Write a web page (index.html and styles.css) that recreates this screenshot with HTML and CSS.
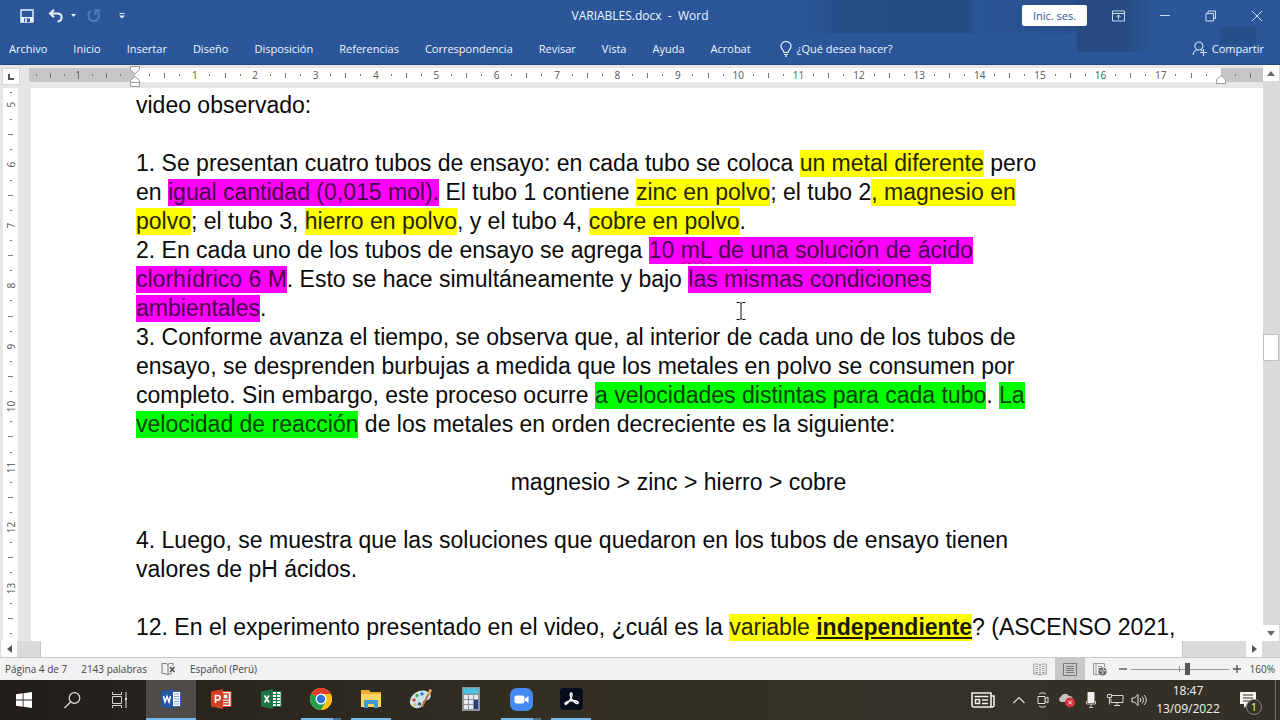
FILE: index.html
```html
<!DOCTYPE html>
<html lang="es">
<head>
    <meta charset="UTF-8">
    <meta name="viewport" content="width=device-width, initial-scale=1.0">
    <title>VARIABLES.docx - Word</title>
    <link rel="stylesheet" href="styles.css">
</head>
<body>
<header class="app-header">
    <div class="title-bar">
        <div class="quick-access">
            <button aria-label="Guardar"><svg width="14" height="14" viewBox="0 0 14 14"><path d="M1 1h12v12H1z" fill="none" stroke="#e8f2fc" stroke-width="1.4"/><path d="M1 8h12v5H1z" fill="#e8f2fc"/><path d="M4 9.500h6V13H4z" fill="#2b579a"/><path d="M5 10h1.800v3H5z" fill="#e8f2fc"/></svg></button>
            <button aria-label="Deshacer"><svg width="16" height="14" viewBox="0 0 16 14"><path d="M2 4.500h7.500c5.500 0 5.500 7.500 0 8M6 .8L2 4.500l4 3.700" fill="none" stroke="#e8f2fc" stroke-width="2"/></svg></button>
            <button class="caret" aria-label="Opciones de deshacer"><svg width="5" height="4" viewBox="0 0 5 4"><path d="M0 0h5L2.500 3z" fill="#e8f2fc"/></svg></button>
            <button aria-label="Rehacer"><svg width="14" height="14" viewBox="0 0 14 14"><path d="M4 2a5.400 5.400 0 1 0 6.500.8M8.500 6V1.500H13" fill="none" stroke="#5580ba" stroke-width="1.800"/></svg></button>
            <button class="customize" aria-label="Personalizar barra"><svg width="6" height="6" viewBox="0 0 6 6"><path d="M.5 0h5v1h-5zM0 2.500h6L3 5.500z" fill="#e8f2fc"/></svg></button>
        </div>
        <div class="doc-title">VARIABLES.docx&nbsp; -&nbsp; Word</div>
        <div class="window-controls">
            <button class="sign-in">Inic. ses.</button>
            <button class="win-btn" aria-label="Opciones de la cinta"><svg width="14" height="12" viewBox="0 0 14 12"><path d="M.5 1h12v10H.5zM.5 3.500h12M6.500 9.500V5M4.500 7l2-2 2 2" fill="none" stroke="#c9dcf3"/></svg></button>
            <button class="win-btn" aria-label="Minimizar"><svg width="12" height="12" viewBox="0 0 12 12"><path d="M1 5.500h10" stroke="#c9dcf3"/></svg></button>
            <button class="win-btn" aria-label="Restaurar"><svg width="12" height="12" viewBox="0 0 12 12"><path d="M1 3.500h7.500V11H1zM3 3.500V1h7.500v7.500h-2" fill="none" stroke="#c9dcf3"/></svg></button>
            <button class="win-btn" aria-label="Cerrar"><svg width="12" height="12" viewBox="0 0 12 12"><path d="M1 1l10 10M11 1L1 11" stroke="#c9dcf3"/></svg></button>
        </div>
    </div>
    <nav class="ribbon-tabs">
        <a href="#">Archivo</a>
        <a href="#">Inicio</a>
        <a href="#">Insertar</a>
        <a href="#">Diseño</a>
        <a href="#">Disposición</a>
        <a href="#">Referencias</a>
        <a href="#">Correspondencia</a>
        <a href="#">Revisar</a>
        <a href="#">Vista</a>
        <a href="#">Ayuda</a>
        <a href="#">Acrobat</a>
        <button class="tell-me"><svg width="12" height="16" viewBox="0 0 12 16"><path d="M4 11.500c0-2.500-3-3-3-6.200a5 4.800 0 0 1 10 0c0 3.200-3 3.700-3 6.200zM4 13.500h4M5 15.200h2" fill="none" stroke="#e8f2fc" stroke-width="1.200"/></svg>¿Qué desea hacer?</button>
        <button class="share"><svg width="15" height="15" viewBox="0 0 15 15"><path d="M1 14c.5-3 2-4.600 4.500-5.200M7 1a4 4 0 0 1 2.500 7A4 4 0 1 1 7 1zM9 9l1.500 1M11.500 8v7M8 11.500h7" fill="none" stroke="#c9dcf3" stroke-width="1.100"/></svg>Compartir</button>
    </nav>
</header>

<main class="workspace">
    <div class="ruler-row">
        <div class="corner"><button aria-label="Tabulación"><svg width="6" height="6" viewBox="0 0 6 6"><path d="M1 0v5h5" fill="none" stroke="#555" stroke-width="2"/></svg></button></div>
        <div class="ruler">
            <div class="marks margin-left" data-from="-7" data-to="-1"></div>
            <div class="marks text-width" data-from="1" data-to="71">
                <svg class="indent-left" width="10" height="22" viewBox="0 0 10 22"><path d="M.5.500h9v3L5 8 .5 3.500zM.5 16.500v-2L5 10.500l4.500 4v2zM.5 16.500h9v4h-9z" fill="#fff" stroke="#999"/></svg>
                <svg class="indent-right" width="10" height="9" viewBox="0 0 10 9"><path d="M.5 8.500v-4L5 .5l4.500 4v4z" fill="#fff" stroke="#999"/></svg>
            </div>
            <div class="marks margin-right" data-from="1" data-to="2"></div>
        </div>
    </div>
    <div class="side-ruler">
        <div class="marks vertical" data-from="19" data-to="55"></div>
    </div>
    <article class="page">
        <p>video observado:</p>
        <p>&nbsp;</p>
        <p>1. Se presentan cuatro tubos de ensayo: en cada tubo se coloca <mark>un metal diferente</mark> pero<br>
            en <mark class="pink">igual cantidad (0,015 mol).</mark> El tubo 1 contiene <mark>zinc en polvo</mark>; el tubo 2<mark>, magnesio en<br>
            polvo</mark>; el tubo 3, <mark>hierro en polvo</mark>, y el tubo 4, <mark>cobre en polvo</mark>.</p>
        <p>2. En cada uno de los tubos de ensayo se agrega <mark class="pink">10 <span class="typo">mL</span> de una solución de ácido<br>
            clorhídrico 6 M</mark>. Esto se hace simultáneamente y bajo <mark class="pink">las mismas condiciones<br>
            ambientales</mark>.</p>
        <p>3. Conforme avanza el tiempo, se observa que, al interior de cada uno de los tubos de<br>
            ensayo, se desprenden burbujas a medida que los metales en polvo se consumen por<br>
            completo. Sin embargo, este proceso ocurre <mark class="green">a velocidades distintas para cada tubo</mark>. <mark class="green">La<br>
            velocidad de reacción</mark> de los metales en orden decreciente es la siguiente:</p>
        <p>&nbsp;</p>
        <p class="formula">magnesio &gt; zinc &gt; hierro &gt; cobre</p>
        <p>&nbsp;</p>
        <p>4. Luego, se muestra que las soluciones que quedaron en los tubos de ensayo tienen<br>
            valores de pH ácidos.</p>
        <p>&nbsp;</p>
        <p>12. En el experimento presentado en el video, ¿cuál es la <mark>variable <b>independiente</b></mark>? (ASCENSO 2021,</p>
        <svg class="text-cursor" width="10" height="18" viewBox="0 0 10 18"><path d="M.5.500h3L5 1.500 6.500.500h3M5 1.500v15M.5 17.500h3L5 16.500l1.500 1h3" fill="none" stroke="#111"/></svg>
    </article>
    <div class="v-scroll">
        <button aria-label="Subir"><svg width="8" height="5" viewBox="0 0 8 5"><path d="M0 5h8L4 0z" fill="#666"/></svg></button>
        <div class="v-before"></div>
        <div class="v-thumb"></div>
        <div class="v-after"></div>
        <button aria-label="Bajar"><svg width="8" height="5" viewBox="0 0 8 5"><path d="M0 0h8L4 5z" fill="#666"/></svg></button>
    </div>
</main>

<div class="h-scroll">
    <button aria-label="Izquierda"><svg width="5" height="8" viewBox="0 0 5 8"><path d="M5 0v8L0 4z" fill="#555"/></svg></button>
    <div class="h-thumb"></div>
    <button aria-label="Derecha"><svg width="5" height="8" viewBox="0 0 5 8"><path d="M0 0v8l5-4z" fill="#555"/></svg></button>
</div>

<footer class="status-bar">
    <span>Página 4 de 7</span>
    <span>2143 palabras</span>
    <svg width="15" height="14" viewBox="0 0 15 14"><path d="M7 2.500C5 1 3 1.500 1 1.500v10c2 0 4 0 6 1.500 1-1 2-1.500 4-1.500M7 2.500V13M7 2.500c1-1 2-1 4-1h1v2" fill="none" stroke="#777"/><path d="M9 5l4.500 5M13.500 5L9 10" stroke="#444" stroke-width="1.300"/></svg>
    <span>Español (Perú)</span>
    <div class="views">
        <button aria-label="Modo de lectura"><svg width="14" height="13" viewBox="0 0 14 13"><path d="M7 2C5 .8 3 1 .8 1v10c2.200 0 4.200 0 6.200 1 2-1 4-1 6.200-1V1C11 1 9 .8 7 2zM7 2v10M2.500 3.500H5M2.500 5.500H5M2.500 7.500H5M2.500 9.500H5M9 3.500h2.500M9 5.500h2.500M9 7.500h2.500M9 9.500h2.500" fill="none" stroke="#999"/></svg></button>
        <button class="active" aria-label="Diseño de impresión"><svg width="14" height="13" viewBox="0 0 14 13"><path d="M.5.500h13v12H.5zM3 3.500h8M3 5.500h8M3 7.500h8M3 9.500h8" fill="none" stroke="#777"/></svg></button>
        <button aria-label="Diseño web"><svg width="14" height="13" viewBox="0 0 14 13"><path d="M6 11.500H.5v-11h11V4M3 .5v11M5 3.500h4M5 5.500h2" fill="none" stroke="#999"/><circle cx="9.500" cy="8.500" r="4" fill="#666"/><path d="M7 7.500l2 .5 1 1.500-1 2M10.500 5.500l-.5 1.500 2.500 1" fill="none" stroke="#f2f2f2"/></svg></button>
    </div>
    <div class="zoom">
        <button aria-label="Alejar"><svg width="8" height="8" viewBox="0 0 8 8"><path d="M0 4h8" stroke="#555" stroke-width="1.400"/></svg></button>
        <input type="range" min="0" max="100" value="58" aria-label="Zoom">
        <button aria-label="Acercar"><svg width="8" height="8" viewBox="0 0 8 8"><path d="M0 4h8M4 0v8" stroke="#555" stroke-width="1.400"/></svg></button>
        <span>160%</span>
    </div>
</footer>

<div class="taskbar">
    <button class="system" aria-label="Inicio"><svg width="16" height="16" viewBox="0 0 16 16"><path d="M0 2.300L6.700 1.300V7.600H0zM7.500 1.200L16 0v7.600H7.500zM0 8.400h6.700v6.300L0 13.700zM7.500 8.400H16V16l-8.500-1.200z" fill="#fff"/></svg></button>
    <button class="system" aria-label="Buscar"><svg width="17" height="17" viewBox="0 0 17 17"><circle cx="10.500" cy="6" r="5.300" fill="none" stroke="#e4e2df" stroke-width="1.200"/><path d="M6.500 10L.5 16" stroke="#e4e2df" stroke-width="1.200"/></svg></button>
    <button class="system" aria-label="Vista de tareas"><svg width="18" height="16" viewBox="0 0 18 16"><path d="M1.500 0v2.500h9V0M1.500 4.500h9v7h-9zM1.500 16v-2.500h9V16M15 0v5M15 9v7" fill="none" stroke="#d8d6d2"/><path d="M14 5.500h2v3h-2z" fill="#e4e2df"/></svg></button>
    <button class="app current" aria-label="Word"><svg width="22" height="22" viewBox="0 0 22 22"><path d="M10 3.500h10.500v15H10z" fill="#fff" stroke="#2f62b0"/><path d="M14 6h5M14 8.500h5M14 11h5M14 13.500h5M14 16h5" stroke="#7ba0d8"/><path d="M1 3.500L13 1v20L1 18.500z" fill="#2457a7"/><path d="M3.500 8L5 14l2-5.500L9 14l1.500-6" fill="none" stroke="#fff" stroke-width="1.500"/></svg></button>
    <button class="app" aria-label="PowerPoint"><svg width="22" height="22" viewBox="0 0 22 22"><path d="M11 3.500h10v15H11z" fill="#fff" stroke="#d2482a"/><path d="M13 6h5v5h-5zM12 13.500h7M12 16h7" fill="none" stroke="#d2482a" stroke-width="1.500"/><path d="M1 3.500L13 1v20L1 18.500z" fill="#cf4122"/><path d="M5.500 15V7.500h2c3.500 0 3.500 4.500 0 4.500h-2" fill="none" stroke="#fff" stroke-width="1.700"/></svg></button>
    <button class="app" aria-label="Excel"><svg width="22" height="22" viewBox="0 0 22 22"><path d="M11 3.500h10v15H11z" fill="#fff" stroke="#1d7544"/><path d="M12 6.500h8M12 9.500h8M12 12.500h8M12 15.500h8M16.500 4v14" stroke="#1d7544" stroke-width="1.200"/><path d="M1 3.500L13 1v20L1 18.500z" fill="#1d7544"/><path d="M4.500 7.500l4.500 7M9 7.500l-4.500 7" stroke="#fff" stroke-width="1.700"/></svg></button>
    <button class="app running split" aria-label="Chrome"><svg width="22" height="22" viewBox="0 0 22 22"><circle cx="11" cy="11" r="11" fill="#fbc116"/><path d="M11 11L1.500 5.500a11 11 0 0 1 19 0z" fill="#e33b2e"/><path d="M11 11L1.500 5.500A11 11 0 0 0 11 22l5-8.500z" fill="#1ea04c"/><path d="M11 6h9.800a11 11 0 0 1-9.800 16l4.700-8z" fill="#fbc116"/><circle cx="11" cy="11" r="5.500" fill="#fff"/><circle cx="11" cy="11" r="4.200" fill="#2f74e0"/></svg></button>
    <button class="app running" aria-label="Explorador"><svg width="22" height="20" viewBox="0 0 22 20"><path d="M1 1h8l1.500 2H21v15H1z" fill="#e8ac2a"/><path d="M1 5h20v13H1z" fill="#fbd566"/><path d="M4 11h14v8h-4v-4H8v4H4z" fill="#3f9ad6"/></svg></button>
    <button class="app" aria-label="Paint"><svg width="24" height="22" viewBox="0 0 24 22"><path d="M1 13C2 6 10 1 17 3c6 2 6 7 2 9-3 1-5 0-5 3 0 5-6 6-9 4.500C2 18 .5 16 1 13z" fill="#cfe2ec"/><circle cx="5" cy="12" r="1.800" fill="#d94735"/><circle cx="8" cy="7.500" r="1.700" fill="#45a65a"/><circle cx="13" cy="6" r="1.700" fill="#3277c8"/><circle cx="6" cy="16.500" r="1.600" fill="#e8b833"/><circle cx="10.500" cy="16" r="1.800" fill="#4e5a60"/><path d="M13 19L20 5" stroke="#b8743a" stroke-width="2"/><path d="M19 6l1-5 3 1-2 5z" fill="#e7a763"/></svg></button>
    <button class="app" aria-label="Calculadora"><svg width="20" height="24" viewBox="0 0 20 24"><path d="M1 0h18v24H1z" fill="#8b9499"/><path d="M2.500 1.500h15v5h-15z" fill="#46c3e0"/><path d="M3 8h4v4H3zM8 8h4v4H8zM13 8h4v4h-4zM3 13h4v4H3zM8 13h4v4H8zM3 18h4v4H3zM8 18h4v4H8z" fill="#e6eaec"/><path d="M13 13h4v9h-4z" fill="#253d82"/></svg></button>
    <button class="app running split" aria-label="Zoom"><svg width="23" height="23" viewBox="0 0 23 23"><rect width="23" height="23" rx="7" fill="#4489f4"/><rect x="4.500" y="7.500" width="10" height="8" rx="2" fill="#fff"/><path d="M15 10.500l3.500-2.500v7L15 12.500z" fill="#fff"/></svg></button>
    <button class="app running" aria-label="Acrobat"><svg width="23" height="22" viewBox="0 0 23 22"><rect width="23" height="22" rx="4" fill="#050c1c"/><path d="M11 5c2 0 1 4-1 7-2 3.500-4.500 5-5 4-.5-1.500 4-3.500 8-3.500s6 2 5 2.800c-1.300.8-5-1.300-7-5.300C10 7.500 10 5 11 5z" fill="none" stroke="#fff" stroke-width="1.400"/></svg></button>

    <div class="tray">
        <button class="news" aria-label="Noticias"><svg width="24" height="16" viewBox="0 0 24 16"><path d="M1 1h19v14H3c-1 0-2-.5-2-2zM20 4h3v9c0 1-.5 2-2 2h-2M3.500 4.500h14" fill="none" stroke="#f3f1ed" stroke-width="1.600"/><path d="M4.500 7.500h4v4h-4zM11 8h6M11 11.500h6" fill="none" stroke="#f3f1ed" stroke-width="1.500"/></svg></button>
        <button aria-label="Mostrar iconos ocultos"><svg width="12" height="8" viewBox="0 0 12 8"><path d="M.5 7L6 1.500 11.500 7" fill="none" stroke="#e4e2df" stroke-width="1.200"/></svg></button>
        <button aria-label="Reunirse ahora"><svg width="12" height="16" viewBox="0 0 12 16"><path d="M1 4.500h7v7H1zM8 7l3-2v6L8 9M2 2c2-1.500 5-1.500 7 0M2 14c2 1.500 5 1.500 7 0" fill="none" stroke="#e4e2df"/></svg></button>
        <button aria-label="OneDrive"><svg width="18" height="15" viewBox="0 0 18 15"><path d="M3 9a3 3 0 0 1 0-5.500A4.500 4.500 0 0 1 11 3a3.500 3.500 0 0 1 3 6z" fill="#c6c4c0"/><circle cx="12" cy="9.500" r="5" fill="#d92c3c"/><path d="M10 7.500l4 4M14 7.500l-4 4" stroke="#fff"/></svg></button>
        <button aria-label="Micrófono"><svg width="10" height="16" viewBox="0 0 10 16"><rect x="1.500" width="7" height="11" rx="1" fill="#f3f1ed"/><path d="M.5 9v3h9V9M5 12v3.500M3 15.500h4" fill="none" stroke="#c6c4c0"/></svg></button>
        <button aria-label="Red"><svg width="17" height="14" viewBox="0 0 17 14"><path d="M5 2.500h11v7H4V6M10 9.500v3M7 12.500h6M.5 1.500h4v3h-4zM2.500 4.500v7" fill="none" stroke="#d8d6d2"/></svg></button>
        <button aria-label="Volumen"><svg width="16" height="14" viewBox="0 0 16 14"><path d="M1 5h2.500L7 1.500v11L3.500 9H1zM9 5c1 1.500 1 2.500 0 4M11 3.500c2 2.500 2 4.500 0 7M13 2c3 3.500 3 6.500 0 10" fill="none" stroke="#e4e2df"/></svg></button>
        <time class="clock">18:47<br>13/09/2022</time>
        <button class="notices" aria-label="Notificaciones"><svg width="18" height="18" viewBox="0 0 18 18"><path d="M1 1h16v12H9l-4 4v-4H1z" fill="#f6f4f0"/><path d="M4 4h10M4 7h10M4 10h7" stroke="#36322a"/></svg><span class="badge">1</span></button>
    </div>
</div>
<script src="ruler.js"></script>
</body>
</html>
```
FILE: styles.css
```css
* {
    box-sizing: border-box;
}
body {
    margin: 0;
    height: 100vh;
    display: flex;
    flex-direction: column;
    overflow: hidden;
    font-family: "Open Sans", "Noto Sans", sans-serif;
    font-size: 12px;
    background: #e6e6e6;
}
button {
    display: flex;
    align-items: center;
    justify-content: center;
    padding: 0;
    border: none;
    background: none;
    color: inherit;
    font: inherit;
    cursor: pointer;
}
svg {
    display: block;
    flex: none;
}

/* title and ribbon */
.app-header {
    flex: none;
    height: 65px;
    color: #edf5fd;
    background:
        linear-gradient(90deg, #264b82 60%, #2a5596) right 130px top / 73px 52px no-repeat,
        linear-gradient(90deg, #2b579a, #274e89 40px, #264c84 170px, #2a5596 175px, #284f8b) right 203px top / 277px 33px no-repeat,
        linear-gradient(#274f8b, #274f8b) right 24px top 27px / 36px 18px no-repeat,
        #2b579a;
    border-bottom: 1px solid #234a85;
}
.title-bar {
    display: grid;
    grid-template-columns: 1fr auto 1fr;
    align-items: center;
    height: 31px;
}
.quick-access {
    display: flex;
    align-items: center;
    padding-left: 20px;
    gap: 14px;
}
.quick-access .caret {
    margin-left: -7px;
    margin-right: -3px;
}
.quick-access .customize {
    margin-left: 4px;
}
.window-controls {
    display: flex;
    align-items: center;
    justify-content: flex-end;
}
.sign-in {
    width: 65px;
    height: 21px;
    margin-right: 9px;
    border-radius: 2px;
    background: #fff;
    color: #2b579a;
    font-size: 11px;
}
.win-btn {
    width: 46px;
    height: 30px;
}
.ribbon-tabs {
    display: flex;
    align-items: center;
    gap: 26px;
    height: 33px;
    padding: 2px 16px 0 9px;
    font-size: 11px;
    white-space: nowrap;
}
.ribbon-tabs a {
    color: inherit;
    text-decoration: none;
}
.tell-me,
.share {
    gap: 5px;
}
.tell-me {
    margin-left: 3px;
}
.share {
    margin-left: auto;
}

/* document area */
.workspace {
    flex: 1;
    min-height: 0;
    display: grid;
    grid-template-columns: 31px 1fr 17px;
    grid-template-rows: 23px 1fr;
}
.ruler-row {
    grid-column: 1 / 3;
    display: flex;
    padding-top: 3px;
}
.corner {
    width: 29px;
    padding-left: 2px;
}
.corner button {
    width: 18px;
    height: 17px;
    background: #fff;
    border: 1px solid #d8d8d8;
}
.ruler {
    flex: 1;
    display: flex;
    height: 14px;
}
.marks {
    display: flex;
    position: relative;
    color: #555;
    font-size: 10px;
}
.marks .mark {
    flex: 1 1 0;
    min-width: 0;
    min-height: 0;
    display: flex;
    align-items: center;
    justify-content: center;
}
.tick::before {
    content: "";
    width: 1px;
    height: 5px;
    background: #777;
}
.dot::before {
    content: "";
    width: 1px;
    height: 2px;
    background: #777;
}
.margin-left,
.margin-right {
    background: #c6c6c6;
}
.margin-left {
    width: 106px;
    padding-right: 8px;
}
.text-width {
    flex: 1;
    z-index: 1;
    padding: 0 7px;
    background: #fff;
}
.margin-right {
    width: 42px;
    padding: 0 5px 0 7px;
}
.indent-left {
    position: absolute;
    left: -5px;
    top: -2px;
}
.indent-right {
    position: absolute;
    right: -5px;
    top: 7px;
}
.side-ruler {
    padding-left: 3px;
    display: flex;
}
.vertical {
    flex-direction: column;
    width: 15px;
    background: #fff;
}
.vertical .mark {
    transform: rotate(-90deg);
}
.vertical .mark:first-child {
    flex: 0 0 9px;
}
.page {
    position: relative;
    overflow: hidden;
    min-width: 0;
    padding: 3px 42px 0 105px;
    background: #fff;
    color: #0a0a0a;
    font: 23px/29px "Liberation Sans", Arial, sans-serif;
    white-space: nowrap;
}
.page p {
    margin: 0;
}
.page .formula {
    text-align: center;
}
mark {
    padding-bottom: 1px;
    background: #ff0;
    color: #252500;
}
mark.pink {
    background: #f0f;
    color: #480048;
}
mark.green {
    background: #0f0;
    color: #004000;
}
mark b {
    color: #1a1a00;
    text-decoration: underline;
}
.typo {
    text-decoration: underline wavy #b00060 1px;
    text-underline-offset: 2px;
}
.text-cursor {
    position: absolute;
    left: 705px;
    top: 214px;
}

/* scroll bars */
.v-scroll {
    grid-column: 3;
    grid-row: 1 / 3;
    display: flex;
    flex-direction: column;
    background: #dadada;
}
.v-scroll button,
.h-scroll button {
    flex: none;
    width: 16px;
    height: 16px;
    background: #fff;
}
.v-before {
    flex: 252;
}
.v-thumb {
    height: 27px;
    width: 16px;
    background: #fff;
    border: 1px solid #c0c0c0;
}
.v-after {
    flex: 262;
}
.h-scroll {
    flex: none;
    display: flex;
    height: 17px;
    padding: 0 18px 0 1px;
    background: #dadada;
    border-bottom: 1px solid #c6c6c6;
}
.h-thumb {
    flex: 1;
    margin: 0 63px 0 23px;
    background: #fff;
    border-left: 1px solid #c6c6c6;
    border-right: 1px solid #c6c6c6;
}

/* status bar */
.status-bar {
    flex: none;
    display: flex;
    align-items: center;
    gap: 14px;
    height: 22px;
    padding: 0 5px;
    background: #f2f2f2;
    color: #444;
    font-size: 10px;
    white-space: nowrap;
}
.views,
.zoom {
    display: flex;
    align-items: center;
}
.views {
    margin-left: auto;
}
.views button {
    width: 30px;
    height: 22px;
}
.views .active {
    background: #c8c8c8;
}
.zoom {
    margin-left: -10px;
}
.zoom input {
    appearance: none;
    width: 98px;
    height: 12px;
    margin: 0 4px;
    background:
        linear-gradient(#888, #888) center / 1px 6px no-repeat,
        linear-gradient(#999, #999) center / 100% 1px no-repeat;
}
.zoom input::-webkit-slider-thumb {
    appearance: none;
    width: 5px;
    height: 12px;
    background: #555;
}
.zoom span {
    margin-left: 9px;
}

/* taskbar */
.taskbar {
    flex: none;
    display: flex;
    height: 40px;
    background: linear-gradient(90deg, #211e1b, #2b271f 20%, #353023 45%, #353126 70%, #353027);
    color: #f3f1ed;
}
.system {
    width: 48px;
}
.app {
    width: 50px;
    border-bottom: 2px solid transparent;
}
.system + .app {
    margin-left: 2px;
}
.current {
    background: #504b47 content-box;
    border-color: #76b9ed;
}
.running {
    background: linear-gradient(#76b9ed, #76b9ed) center bottom / 40px 2px no-repeat border-box;
}
.split {
    background:
        linear-gradient(#467295, #467295) right 5px bottom / 8px 2px no-repeat border-box,
        linear-gradient(#76b9ed, #76b9ed) center bottom / 40px 2px no-repeat border-box;
}
.tray {
    display: flex;
    align-items: center;
    margin-left: auto;
    margin-right: 4px;
    padding-right: 5px;
    border-right: 1px solid #77736b;
}
.tray button {
    width: 24px;
    height: 40px;
}
.tray .news {
    width: 48px;
}
.clock {
    width: 74px;
    text-align: center;
    line-height: 18px;
}
.tray .notices {
    position: relative;
    width: 45px;
}
.badge {
    position: absolute;
    right: 8px;
    bottom: 5px;
    width: 16px;
    height: 16px;
    border: 1px solid #8a867e;
    border-radius: 50%;
    background: #36322a;
    font-size: 11px;
    line-height: 14px;
}
```
FILE: ruler.js
```js
// one mark every quarter of a centimetre
document.querySelectorAll('.marks').forEach(function (ruler) {
    const from = Number(ruler.dataset.from);
    const to = Number(ruler.dataset.to);
    for (let i = from; i <= to; i++) {
        const mark = document.createElement('span');
        mark.className = 'mark';
        if (i % 4 === 0) {
            mark.textContent = Math.abs(i / 4);
        } else {
            mark.classList.add(i % 2 === 0 ? 'tick' : 'dot');
        }
        ruler.appendChild(mark);
    }
});
```
